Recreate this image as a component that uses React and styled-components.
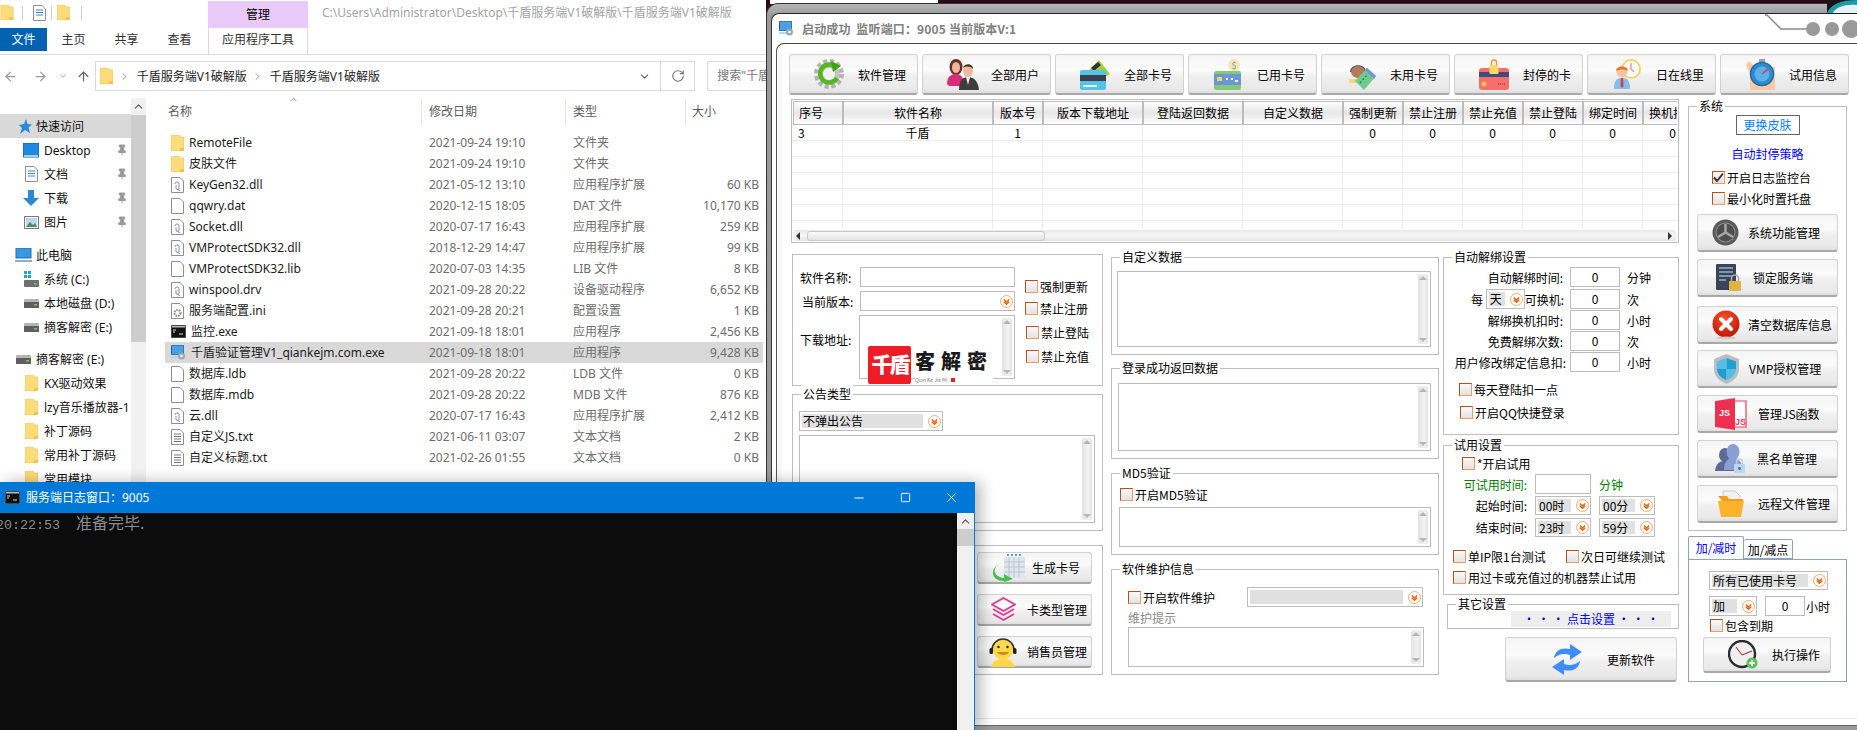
// Desktop with file explorer, log console and the Qiandun server manager window
import React from 'react';
import styled, { createGlobalStyle } from 'styled-components';
import { ArrowLeft, ArrowRight, ArrowUp, ChevronDown, ChevronRight, ChevronUp, RotateCw, Pin, Minus, Square, X } from 'lucide-react';

const sans = `"Noto Sans", "Noto Sans CJK SC", sans-serif`;
const cjk = `"Noto Sans CJK SC", sans-serif`;

const Global = createGlobalStyle`
  html, body { margin: 0; padding: 0; background: #2a0a16; }
  * { box-sizing: border-box; }
  body { font-family: ${cjk}; font-size: 12px; line-height: 17px; color: #000; }
`;

const Desktop = styled.div`
  position: relative;
  width: 1857px;
  height: 730px;
  overflow: hidden;
  background: #2a0a16;
`;

const WhiteStrip = styled.div`
  position: absolute;
  left: 770px;
  top: 0;
  width: 168px;
  height: 4px;
  background: #fff;
`;

const CornerArt = styled.svg`
  position: absolute;
  right: 0;
  top: 0;
  z-index: 3;
`;

/* ---------- explorer ---------- */

const Explorer = styled.div`
  position: absolute;
  left: 0;
  top: 0;
  width: 766px;
  height: 484px;
  background: #fff;
  font-family: ${sans};
  overflow: hidden;
`;

const TitleRow = styled.div`
  display: flex;
  align-items: flex-start;
  height: 28px;
`;

const QuickBar = styled.div`
  display: flex;
  align-items: center;
  width: 208px;
  height: 24px;
  padding-top: 1px;
`;

const QuickSep = styled.i`
  width: 1px;
  height: 14px;
  background: #ccc;
  margin: 0 ${p => p.$r}px 0 ${p => p.$l}px;
`;

const ContextTab = styled.div`
  width: 100px;
  height: 27px;
  margin-top: 1px;
  background: #e8c9f8;
  text-align: center;
  line-height: 27px;
`;

const PathTitle = styled.div`
  margin-left: 14px;
  line-height: 26px;
  color: #a3a3a3;
  white-space: nowrap;
`;

const RibbonTabs = styled.div`
  display: flex;
  height: 27px;
  border-bottom: 1px solid #dadada;
`;

const FileTab = styled.div`
  width: 47px;
  height: 23px;
  background: #0063b1;
  color: #fff;
  text-align: center;
  line-height: 23px;
`;

const RibbonTab = styled.div`
  width: ${p => p.$w || 53}px;
  height: 26px;
  line-height: 24px;
  text-align: center;
  color: #333;
  margin-left: ${p => p.$ml || 0}px;
  ${p => p.$boxed && 'border-left: 1px solid #dadada; border-right: 1px solid #dadada;'}
`;

const NavBar = styled.div`
  display: flex;
  align-items: center;
  height: 36px;
  padding-top: 6px;
`;

const NavArrows = styled.div`
  display: flex;
  align-items: center;
  width: 97px;
  padding-left: 3px;
  gap: 2px;
  color: #9a9a9a;
`;

const AddressBox = styled.div`
  display: flex;
  align-items: center;
  width: 615px;
  height: 30px;
  border: 1px solid #d9d9d9;
  padding-left: 4px;
  color: #222;
`;

const Crumb = styled.span`
  white-space: nowrap;
  margin-right: 5px;
`;

const CrumbArrow = styled(ChevronRight)`
  flex: none;
  margin: 0 7px 0 ${p => p.$ml || 0}px;
  color: #888;
`;

const AddressEnd = styled.div`
  margin-left: auto;
  display: flex;
  align-items: center;
  height: 100%;
  color: #666;
`;

const RefreshSlot = styled.div`
  display: flex;
  align-items: center;
  justify-content: center;
  width: 34px;
  height: 100%;
  margin-left: 9px;
  border-left: 1px solid #d9d9d9;
  color: #777;
`;

const SearchBox = styled.div`
  width: 60px;
  height: 30px;
  margin-left: 12px;
  border: 1px solid #d9d9d9;
  border-right: 0;
  padding-left: 9px;
  line-height: 28px;
  color: #777;
  white-space: nowrap;
  overflow: hidden;
`;

const ExplorerBody = styled.div`
  display: flex;
  height: 393px;
  padding-top: 7px;
`;

const NavPane = styled.div`
  width: 131px;
  padding-top: 16px;
`;

const NavRow = styled.div`
  display: flex;
  align-items: center;
  height: 24px;
  padding-left: ${p => p.$indent}px;
  margin-top: ${p => p.$mt || 0}px;
  white-space: nowrap;
  color: #111;
  background: ${p => (p.$active ? '#d9d9d9' : 'transparent')};
  overflow: hidden;
`;

const NavLabel = styled.span`
  margin-left: ${p => p.$gap || 4}px;
  flex: 1;
`;

const NavPin = styled.span`
  display: flex;
  color: #9a9a9a;
  margin-right: 3px;
`;

const NavScroll = styled.div`
  width: 15px;
  background: #f1f1f1;
  display: flex;
  flex-direction: column;
  align-items: center;
  color: #555;
`;

const NavThumb = styled.div`
  width: 15px;
  height: 227px;
  margin-top: 2px;
  background: #cdcdcd;
`;

const FileList = styled.div`
  width: 598px;
  margin-left: 19px;
`;

const FileHead = styled.div`
  display: grid;
  grid-template-columns: 257px 144px 120px 77px;
  height: 27px;
  position: relative;
  color: #5c5c5c;
  line-height: 27px;
`;

const HeadCell = styled.div`
  padding-left: ${p => p.$pl}px;
  ${p => p.$line && 'border-right: 1px solid #e5e5e5;'}
`;

const SortCaret = styled.span`
  position: absolute;
  left: 123px;
  top: -4px;
  display: flex;
  color: #8a8a8a;
`;

const FileRows = styled.div`
  padding-top: 7px;
`;

const FileRow = styled.div`
  display: grid;
  grid-template-columns: 257px 144px 120px 77px;
  height: 21px;
  line-height: 21px;
  color: #6d6d6d;
  background: ${p => (p.$active ? '#d9d9d9' : 'transparent')};
`;

const FileName = styled.div`
  display: flex;
  align-items: center;
  gap: 5px;
  padding-left: 6px;
  color: #1c1c1c;
  white-space: nowrap;
`;

const FileCell = styled.div`
  padding-left: 7px;
  white-space: nowrap;
`;

const SizeCell = styled.div`
  text-align: right;
  padding-right: 4px;
`;

/* ---------- console ---------- */

const ConsoleWin = styled.div`
  position: absolute;
  left: 0;
  top: 482px;
  width: 975px;
  height: 248px;
  z-index: 5;
  background: #0c0c0c;
  border-right: 1px solid #0078d7;
  box-shadow: 6px 0 14px rgba(0, 0, 0, 0.28);
`;

const ConsoleBar = styled.div`
  display: flex;
  align-items: center;
  height: 31px;
  padding-left: 5px;
  background: #0078d7;
  color: #fff;
  font-family: ${sans};
`;

const ConsoleTitle = styled.span`
  margin-left: 6px;
  flex: 1;
`;

const ConsoleBtn = styled.span`
  display: flex;
  justify-content: center;
  width: 46px;
  color: #fff;
`;

const ConsoleBody = styled.div`
  display: flex;
  justify-content: space-between;
  height: 217px;
`;

const ConsoleText = styled.pre`
  margin: 1px 0 0 -4px;
  font-family: "Liberation Mono", ${cjk}, monospace;
  font-size: 13.33px;
  line-height: 17px;
  color: #8b8b8b;
`;

const ConsoleWide = styled.span`
  font-family: ${cjk};
  font-size: 16px;
`;

const ConsoleScroll = styled.div`
  width: 17px;
  background: #f0f0f0;
  display: flex;
  flex-direction: column;
  align-items: center;
  color: #555;
`;

const ConsoleThumb = styled.div`
  width: 17px;
  height: 17px;
  margin-top: 1px;
  background: #cdcdcd;
`;

/* ---------- server window frame ---------- */

const ServerFrame = styled.div`
  position: absolute;
  left: 766px;
  top: 3px;
  right: 0;
  height: 740px;
  background: linear-gradient(#b5b5b5, #999 12px);
  border-left: 1px solid #333;
  border-top: 1px solid #333;
  border-top-left-radius: 12px;
  padding: 9px 0 0 4px;
`;

const Shell = styled.div`
  position: relative;
  height: 713px;
  background: #fff;
  border-left: 1px solid #333;
  border-top: 1px solid #222;
  border-bottom: 1px solid #666;
  border-top-left-radius: 8px;
  padding-left: 4px;
`;

const TitleBar = styled.div`
  display: flex;
  align-items: center;
  height: 29px;
  padding-left: 3px;
  font-weight: 700;
  color: #808080;
`;

const TitleText = styled.span`
  margin-left: 8px;
  white-space: pre;
  letter-spacing: 0.15px;
`;

const ControlsArt = styled.svg`
  position: absolute;
  right: 0;
  top: 0;
`;

const Panel = styled.div`
  height: 676px;
  border-left: 1px solid #555;
  border-top: 1px solid #444;
  border-bottom: 1px solid #e6e6e6;
  border-top-left-radius: 8px;
  padding: 10px 0 0 14px;
  box-shadow: inset 5px 0 0 #f8f8f8;
`;

const Toolbar = styled.div`
  display: flex;
  gap: 4px;
  margin-left: -2px;
`;

const IconBtn = styled.div`
  display: flex;
  align-items: center;
  flex: none;
  width: ${p => p.$w}px;
  height: ${p => p.$h}px;
  margin: ${p => p.$mt || 0}px 0 0 ${p => p.$ml || 0}px;
  border: 1px solid #d2d2d2;
  border-bottom: 2px solid #a8a8a8;
  border-radius: 3px;
  background: linear-gradient(#f5f5f5, #fbfbfb 40%, #f0f0f0 55%, #e9e9e9 90%, #dedede);
  white-space: nowrap;
`;

const IconSlot = styled.span`
  display: flex;
  align-items: center;
  justify-content: center;
  flex: none;
  width: ${p => p.$lead}px;
  padding-left: ${p => p.$pad || 0}px;
`;

const MainRow = styled.div`
  display: flex;
  margin-top: 4px;
`;

const LeftPane = styled.div`
  width: 888px;
`;

const Columns = styled.div`
  display: flex;
`;

const Column = styled.div`
  width: ${p => p.$w}px;
  margin-left: ${p => p.$ml || 0}px;
  display: flex;
  flex-direction: column;
`;

/* ---------- table ---------- */

const TableBox = styled.div`
  width: 888px;
  height: 144px;
  border: 1px solid #bdbdbd;
  padding: 1px;
  overflow: hidden;
`;

const columns = '50px 150px 50px 100px 100px 100px 60px 60px 60px 60px 60px 60px';

const TableHead = styled.div`
  display: grid;
  grid-template-columns: ${columns};
  width: 884px;
  height: 24px;
  overflow: hidden;
`;

const HeadTh = styled.div`
  border: 1px solid #bcbcbc;
  background: linear-gradient(#fff, #e6e6e6 50%, #fff);
  line-height: 22px;
  text-align: ${p => (p.$left ? 'left' : 'center')};
  padding-left: ${p => (p.$left ? 5 : 0)}px;
  white-space: nowrap;
`;

const TableBody = styled.div`
  width: 884px;
  height: 104px;
  overflow: hidden;
`;

const TableRow = styled.div`
  display: grid;
  grid-template-columns: ${columns};
  height: 16px;
`;

const TableCell = styled.div`
  border-right: 1px solid #ececec;
  border-bottom: 1px solid #ececec;
  line-height: 15px;
  text-align: ${p => (p.$left ? 'left' : 'center')};
  padding-left: ${p => (p.$left ? 5 : 0)}px;
`;

const HScroll = styled.div`
  display: flex;
  align-items: center;
  height: 11px;
  margin-top: 1px;
  background: linear-gradient(#e8e8e8, #f6f6f6 50%, #e4e4e4);
  border-radius: 4px;
`;

const HThumb = styled.div`
  width: 238px;
  height: 10px;
  margin-left: 7px;
  border: 1px solid #c8c8c8;
  border-radius: 3px;
  background: linear-gradient(#fafafa, #e4e4e4);
`;

const ArrowCap = styled.i`
  width: 0;
  height: 0;
  margin: ${p => (p.$right ? '0 5px 0 auto' : '0 0 0 3px')};
  border-top: 4px solid transparent;
  border-bottom: 4px solid transparent;
  ${p => (p.$right ? 'border-left: 4px solid #333;' : 'border-right: 4px solid #333;')}
`;

/* ---------- form parts ---------- */

const Group = styled.div`
  position: relative;
  flex: none;
  width: ${p => (p.$w ? `${p.$w}px` : '100%')};
  height: ${p => p.$h}px;
  margin: ${p => p.$mt || 0}px 0 0 ${p => p.$ml || 0}px;
  padding: ${p => p.$pad || '0'};
  border: 1px solid ${p => p.$line || '#bdbdbd'};
`;

const Legend = styled.span`
  position: absolute;
  left: ${p => p.$x || 8}px;
  top: -10px;
  padding: 0 2px;
  background: #fff;
  white-space: nowrap;
`;

const Row = styled.div`
  display: flex;
  align-items: ${p => p.$align || 'center'};
  margin: ${p => p.$mt || 0}px 0 0 ${p => p.$ml || 0}px;
  white-space: nowrap;
`;

const FieldLabel = styled.span`
  flex: none;
  display: flex;
  justify-content: ${p => (p.$right ? 'flex-end' : 'flex-start')};
  align-items: center;
  width: ${p => p.$w}px;
  padding-right: ${p => p.$pr || 0}px;
  padding-left: ${p => p.$pl || 0}px;
  margin-top: ${p => p.$mt || 0}px;
  color: ${p => p.$color || '#000'};
`;

const Unit = styled.span`
  margin-left: ${p => p.$ml || 7}px;
  color: ${p => p.$color || '#000'};
`;

const Input = styled.div`
  flex: none;
  width: ${p => p.$w}px;
  height: ${p => p.$h || 20}px;
  margin-left: ${p => p.$ml || 0}px;
  border: 1px solid #bcbcbc;
  text-align: center;
  line-height: 18px;
`;

const TextArea = styled.div`
  position: relative;
  display: flex;
  justify-content: flex-end;
  flex: none;
  width: ${p => p.$w}px;
  height: ${p => p.$h}px;
  margin: ${p => p.$mt || 0}px 0 0 ${p => p.$ml || 0}px;
  padding: 2px;
  border: 1px solid #bcbcbc;
  background: #fff;
`;

const VScroll = styled.div`
  display: flex;
  flex-direction: column;
  justify-content: space-between;
  align-items: center;
  width: 10px;
  height: 100%;
  padding: 2px 0;
  border-radius: 3px;
  background: linear-gradient(90deg, #e2e2e2, #f2f2f2 60%, #e2e2e2);
`;

const ScrollTip = styled.i`
  width: 0;
  height: 0;
  border-left: 4px solid transparent;
  border-right: 4px solid transparent;
  ${p => (p.$down ? 'border-top: 4px solid #b5b5b5;' : 'border-bottom: 4px solid #b5b5b5;')}
`;

const Drop = styled.div`
  display: flex;
  align-items: center;
  flex: none;
  width: ${p => p.$w}px;
  height: ${p => p.$h || 20}px;
  margin-left: ${p => p.$ml || 0}px;
  padding: 2px 1px 2px 2px;
  border: 1px solid #bcbcbc;
`;

const DropFill = styled.span`
  flex: 1;
  height: 100%;
  margin-right: 5px;
  padding-left: 1px;
  background: ${p => (p.$empty ? '#fff' : '#e0e0e0')};
  line-height: 14px;
  overflow: hidden;
`;

const ChevronMark = styled.svg`
  flex: none;
`;

const CheckLine = styled.div`
  display: flex;
  align-items: center;
  height: 13px;
  gap: 2px;
  ${p => p.$w && `width: ${p.$w}px;`}
  margin: ${p => p.$mt || 0}px 0 0 ${p => p.$ml || 0}px;
  white-space: nowrap;
`;

const CheckBox = styled.span`
  display: flex;
  align-items: center;
  justify-content: center;
  flex: none;
  width: 13px;
  height: 13px;
  border: 1px solid;
  border-color: #b8501e #f09a6a #f09a6a #b8501e;
  background: linear-gradient(#fafafa, #e2e2e2);
`;

const FormSplit = styled.div`
  display: flex;
`;

const CheckColumn = styled.div`
  margin: 13px 0 0 10px;
`;

const Watermark = styled.div`
  position: absolute;
  left: 75px;
  top: 91px;
  display: flex;
  align-items: flex-start;
  z-index: 1;
`;

const StampMark = styled.span`
  display: flex;
  align-items: center;
  justify-content: center;
  width: 43px;
  height: 38px;
  background: #ee1c25;
  color: #fff;
  font-family: "Liberation Serif", ${cjk}, serif;
  font-size: 21px;
  font-weight: 900;
  letter-spacing: -3px;
  border-radius: 2px;
`;

const WaterInk = styled.span`
  display: flex;
  flex-direction: column;
  margin: 3px 0 0 4px;
  font-size: 20px;
  line-height: 24px;
  font-weight: 900;
  letter-spacing: 6px;
  color: #1b1b1b;
`;

const WaterSmall = styled.small`
  display: flex;
  align-items: center;
  gap: 3px;
  margin-top: 3px;
  font-size: 5px;
  line-height: 7px;
  letter-spacing: 0;
  font-weight: 400;
  color: #777;
  background: #fff;
`;

const WaterDot = styled.i`
  width: 4px;
  height: 4px;
  background: #ee1c25;
`;

const LinkBox = styled.div`
  width: 64px;
  height: 20px;
  margin-top: 8px;
  border: 1px solid #666;
  color: #0080ff;
  text-align: center;
  line-height: 18px;
`;

const BlueText = styled.div`
  margin-top: 10px;
  color: #0000ff;
  text-align: center;
`;

const SysGroup = styled(Group)`
  display: flex;
  flex-direction: column;
  align-items: center;
`;

const Sidebar = styled.div`
  width: 159px;
  margin-left: 9px;
  padding-top: 7px;
`;

const SysChecks = styled.div`
  align-self: flex-start;
  margin: 9px 0 0 23px;
`;

const ClickFill = styled.div`
  width: 160px;
  height: 16px;
  margin: 6px 0 0 63px;
  background: #eee;
  color: #0000ff;
  text-align: center;
  line-height: 15px;
  white-space: pre;
`;

const HintText = styled.div`
  margin-top: 2px;
  color: #8a8a8a;
`;

const TabStrip = styled.div`
  display: flex;
  align-items: flex-end;
  height: 23px;
  margin-top: 5px;
`;

const TabItem = styled.div`
  position: relative;
  width: ${p => p.$w}px;
  height: ${p => (p.$active ? 24 : 20)}px;
  margin-bottom: ${p => (p.$active ? -1 : 0)}px;
  border: 1px solid #8aa5b5;
  border-bottom: ${p => (p.$active ? '0' : '1px solid #8aa5b5')};
  border-left: ${p => (p.$active ? '1px solid #8aa5b5' : '0')};
  border-radius: 2px 2px 0 0;
  background: #fff;
  color: ${p => (p.$active ? '#0000ff' : '#000')};
  text-align: center;
  line-height: ${p => (p.$active ? 22 : 19)}px;
`;

/* ---------- drawn icons ---------- */

const Chevron = () => (
  <ChevronMark width="13" height="13" viewBox="0 0 13 13">
    <circle cx="6.5" cy="6.5" r="6" fill="#fff" stroke="#ffa76c" />
    <path d="M3.8 4.6 6.5 7 9.2 4.6M3.8 6.8 6.5 9.2 9.2 6.8" fill="none" stroke="#f0600a" strokeWidth="1.4" />
  </ChevronMark>
);

const Check = ({ on, text, mt, ml, w }) => (
  <CheckLine $mt={mt} $ml={ml} $w={w}>
    <CheckBox>
      {on && (
        <svg width="11" height="11" viewBox="0 0 11 11">
          <path d="M1 5.5 4 9 10 1.5" fill="none" stroke="#333" strokeWidth="2" />
        </svg>
      )}
    </CheckBox>
    {text}
  </CheckLine>
);

const Area = props => (
  <TextArea {...props}>
    {props.children}
    <VScroll>
      <ScrollTip />
      <ScrollTip $down />
    </VScroll>
  </TextArea>
);

const Select = ({ w, h, ml, text, empty }) => (
  <Drop $w={w} $h={h} $ml={ml}>
    <DropFill $empty={empty}>{text}</DropFill>
    <Chevron />
  </Drop>
);

const GearIcon = () => (
  <svg width="32" height="32" viewBox="0 0 32 32">
    <circle cx="16" cy="16" r="12.5" fill="none" stroke="#b3b3b3" strokeWidth="5" strokeDasharray="4 2.6" />
    <circle cx="16" cy="16" r="10.5" fill="#c4c4c4" />
    <circle cx="16" cy="16" r="6" fill="#f2f2f2" />
    <path d="M21 8A9 9 0 1 0 24 20" fill="none" stroke="#52b81e" strokeWidth="4.5" />
    <path d="M18 3 28 8 20 14Z" fill="#3fa312" />
  </svg>
);

const PeopleIcon = () => (
  <svg width="33" height="31" viewBox="0 0 33 31">
    <ellipse cx="10" cy="8" rx="6.5" ry="8" fill="#6b2e22" />
    <ellipse cx="10" cy="8.5" rx="4" ry="5.5" fill="#efb9a0" />
    <path d="M1 25C1 17 6 15 10 15S18 18 18 25L14 27H3Z" fill="#d62f78" />
    <ellipse cx="22" cy="12" rx="5" ry="6" fill="#efb9a0" />
    <path d="M17 9C18 4 27 4 27 10 24 7 20 7 17 9Z" fill="#4a2e1c" />
    <path d="M13 31C13 21 17 18 22 18S32 21 33 31Z" fill="#3d3d3d" />
    <path d="M20 18H24L22 26Z" fill="#f0f0f0" />
  </svg>
);

const CardIcon = () => (
  <svg width="30" height="31" viewBox="0 0 30 31">
    <path d="M6 14 19 1 30 15 20 21Z" fill="#a6cf3e" />
    <path d="M11 9 18 3 21 6 14 12Z" fill="#333" />
    <rect x="0" y="11" width="26" height="20" rx="2" fill="#53c3e8" />
    <rect x="0" y="16" width="26" height="6" fill="#3a3f4a" />
    <rect x="3" y="26" width="14" height="2" fill="#e8f8ff" />
  </svg>
);

const UsedCardIcon = () => (
  <svg width="28" height="31" viewBox="0 0 28 31">
    <circle cx="20" cy="6" r="6" fill="#fbe3c2" />
    <text x="17.5" y="9.5" fontSize="9" fill="#57b56a">$</text>
    <rect x="0" y="12" width="27" height="19" rx="2" fill="#84c973" />
    <rect x="0" y="15" width="27" height="11" fill="#6b97d9" />
    <rect x="3" y="18" width="5" height="4" fill="#f4d35e" />
    <path d="M12 20H14M17 20H19M21 22H24" stroke="#fff" strokeWidth="2" />
  </svg>
);

const OfficerIcon = () => (
  <svg width="29" height="31" viewBox="0 0 29 31">
    <path d="M3 13C3 4 19 4 19 13Z" fill="#3f4f72" />
    <ellipse cx="11" cy="13" rx="7" ry="6" fill="#b57a5c" />
    <path d="M2 20H17V24H2Z" fill="#f6d879" />
    <path d="M8 22 20 9 29 17 17 31Z" fill="#6ecc8c" />
    <path d="M20 9 29 17 27 20 18 11Z" fill="#7f8fe0" />
    <path d="M13 24 21 15" stroke="#2f7f52" strokeWidth="1.2" strokeDasharray="2 2" />
  </svg>
);

const LockedCardIcon = () => (
  <svg width="30" height="31" viewBox="0 0 30 31">
    <rect x="0" y="9" width="30" height="22" rx="3" fill="#f66e6e" />
    <rect x="0" y="13" width="30" height="5" fill="#3f4f7a" />
    <circle cx="5" cy="25" r="2.5" fill="#f6c544" />
    <path d="M19 25H26" stroke="#7a2a2a" strokeWidth="1" strokeDasharray="1 1" />
    <rect x="10.5" y="6" width="9" height="9" rx="1" fill="#f9d96a" />
    <path d="M12.5 6V3.5A2.5 2.5 0 0 1 17.5 3.5V6" fill="none" stroke="#e89a2a" strokeWidth="1.5" />
  </svg>
);

const OnlineIcon = () => (
  <svg width="28" height="30" viewBox="0 0 28 30">
    <circle cx="18" cy="10" r="9" fill="#fff" stroke="#f3d26a" strokeWidth="2" />
    <path d="M18 4V10L21 13" fill="none" stroke="#e98a7a" strokeWidth="1.3" />
    <path d="M1 30C1 21 4 19 9 19S17 21 17 30Z" fill="#80bfec" />
    <circle cx="9" cy="13" r="5.5" fill="#f6c4a2" />
    <path d="M3 12C3 6 15 6 15 12 12 10 7 10 3 12Z" fill="#e8702a" />
    <path d="M8 19H10L10.5 27 9 29 7.5 27Z" fill="#e5383b" />
  </svg>
);

const TrialIcon = () => (
  <svg width="29" height="31" viewBox="0 0 29 31">
    <path d="M4 31V15L0 6 3 2 10 9 24 8 29 8V31Z" fill="#fbc8a2" />
    <rect x="13" y="0" width="6" height="3" fill="#9aa4b0" />
    <circle cx="16" cy="15" r="11.5" fill="#2f8bd0" stroke="#1f6aa5" strokeWidth="1.5" />
    <circle cx="16" cy="15" r="7.5" fill="#5bb0e8" />
    <path d="M16 15 22 10" stroke="#e5383b" strokeWidth="1.5" />
  </svg>
);

const DiscIcon = () => (
  <svg width="27" height="27" viewBox="0 0 27 27">
    <circle cx="13.5" cy="13.5" r="13" fill="#5a5a5a" />
    <circle cx="13.5" cy="13.5" r="10" fill="#8e8e8e" />
    <circle cx="13.5" cy="13.5" r="9" fill="#4e4e4e" />
    <path d="M13.5 13.5V5M13.5 13.5 6 18M13.5 13.5 21 18" stroke="#a8a8a8" strokeWidth="2.5" />
  </svg>
);

const ServerLockIcon = () => (
  <svg width="25" height="28" viewBox="0 0 25 28">
    <rect x="0" y="0" width="20" height="26" rx="1" fill="#3b4358" />
    <path d="M3 4H17M3 8H17M3 12H17M3 16H10" stroke="#8fb4c9" strokeWidth="1.6" />
    <rect x="13" y="17" width="12" height="10" rx="1" fill="#e3b341" />
    <path d="M15.5 17V14.5A3.5 3.5 0 0 1 22.5 14.5V17" fill="none" stroke="#a8a8a8" strokeWidth="1.6" />
  </svg>
);

const RedXIcon = () => (
  <svg width="28" height="30" viewBox="0 0 28 30">
    <defs>
      <radialGradient id="rx" cx="45%" cy="30%" r="70%">
        <stop offset="0" stopColor="#f6512b" />
        <stop offset="1" stopColor="#c01505" />
      </radialGradient>
    </defs>
    <circle cx="14" cy="14" r="13.5" fill="url(#rx)" />
    <ellipse cx="14" cy="28" rx="10" ry="1.5" fill="#ccc" />
    <path d="M9 9 19 19M19 9 9 19" stroke="#fff" strokeWidth="4" strokeLinecap="round" />
  </svg>
);

const ShieldIcon = () => (
  <svg width="25" height="30" viewBox="0 0 25 30">
    <path d="M12.5 0 25 5V15C25 23 18 28 12.5 30 7 28 0 23 0 15V5Z" fill="#b7bfc4" />
    <path d="M12.5 4 22 7.5V15H12.5ZM12.5 15V26C7 24 3 20 3 15Z" fill="#1f9ed1" />
    <path d="M12.5 4V15H3V7.5ZM12.5 15H22C22 20 18 24 12.5 26Z" fill="#56bde4" />
  </svg>
);

const JsIcon = () => (
  <svg width="32" height="32" viewBox="0 0 32 32">
    <path d="M19 3H31V29H17" fill="#fff" stroke="#ee3b58" strokeWidth="1.2" />
    <path d="M0 3 20 0V32L0 29Z" fill="#ef2f50" />
    <text x="4" y="18" fontSize="9" fontWeight="700" fill="#fff" fontFamily="Liberation Sans">JS</text>
    <text x="20" y="27" fontSize="9" fontWeight="700" fill="#ee3b58" fontFamily="Liberation Sans">JS</text>
  </svg>
);

const BlacklistIcon = () => (
  <svg width="30" height="29" viewBox="0 0 30 29">
    <ellipse cx="10" cy="11" rx="6" ry="7" fill="#5b6b94" />
    <path d="M0 27C1 18 6 17 10 17S18 19 19 27Z" fill="#5b6b94" />
    <ellipse cx="18" cy="8" rx="6.5" ry="8" fill="#8a9ed4" />
    <path d="M9 26C9 17 13 14 18 14S27 17 28 26Z" fill="#8a9ed4" />
    <rect x="19" y="20" width="11" height="9" rx="1" fill="#b9d8ee" />
    <path d="M21.5 20V18A3 3 0 0 1 27.5 18V20" fill="none" stroke="#b9d8ee" strokeWidth="1.5" />
    <circle cx="24.5" cy="24.5" r="1.4" fill="#3d6f98" />
  </svg>
);

const FolderOpenIcon = () => (
  <svg width="26" height="27" viewBox="0 0 26 27">
    <path d="M5 1H17L22 6V15H5Z" fill="#f2f2f2" stroke="#ccc" />
    <path d="M0 6H9L11 9H25V12H5Z" fill="#f59c18" />
    <path d="M0 11H26L23 27H3Z" fill="#fdb22b" />
  </svg>
);

const RefreshIcon = () => (
  <svg width="30" height="33" viewBox="0 0 30 33">
    <path d="M2 15C3 7 10 4 18 6V1L30 9 18 17V12C12 10 7 11 2 15Z" fill="#3f8cff" />
    <path d="M28 18C27 26 20 29 12 27V32L0 24 12 16V21C18 23 23 22 28 18Z" fill="#3f8cff" />
  </svg>
);

const ClockPlusIcon = () => (
  <svg width="30" height="29" viewBox="0 0 30 29">
    <circle cx="14" cy="14" r="13" fill="#efefef" stroke="#2c2c2c" strokeWidth="2.4" />
    <path d="M14 15 8 7M14 15 24 11" stroke="#b33" strokeWidth="1.1" />
    <circle cx="24" cy="23" r="5.5" fill="#5fbf5f" />
    <path d="M24 20V26M21 23H27" stroke="#fff" strokeWidth="1.6" />
  </svg>
);

const TableArrowIcon = () => (
  <svg width="33" height="28" viewBox="0 0 33 28">
    <rect x="11" y="3" width="21" height="21" fill="#dfe6ee" />
    <path d="M11 8H32M11 13H32M11 18H32M16 3V24M21 3V24M26 3V24" stroke="#b9c6d4" />
    <path d="M14 1H30" stroke="#4aa3e0" strokeWidth="2" strokeDasharray="2 2" />
    <path d="M9 9C-1 12-1 23 11 24V20L20 25 11 28V27C-3 27-4 13 9 9Z" fill="#46c04a" />
  </svg>
);

const LayersIcon = () => (
  <svg width="25" height="25" viewBox="0 0 25 25">
    <path d="M12.5 1 24 7.5 12.5 14 1 7.5Z" fill="none" stroke="#e23a8a" strokeWidth="1.8" />
    <path d="M2 12 12.5 18 23 12M2 17 12.5 23 23 17" fill="none" stroke="#e23a8a" strokeWidth="1.8" />
  </svg>
);

const DuckIcon = () => (
  <svg width="30" height="30" viewBox="0 0 30 30">
    <path d="M3 30C5 24 8 22 15 22S25 24 27 30Z" fill="#ffd84a" />
    <circle cx="15" cy="12" r="10.5" fill="#ffd84a" />
    <path d="M4 13A11 11 0 0 1 26 13" fill="none" stroke="#333" strokeWidth="1.6" />
    <rect x="1.5" y="11" width="3.5" height="6" rx="1.5" fill="#222" />
    <rect x="25" y="11" width="3.5" height="6" rx="1.5" fill="#222" />
    <circle cx="10.5" cy="10" r="1.2" fill="#222" />
    <circle cx="19.5" cy="10" r="1.2" fill="#222" />
    <path d="M9 15H21C20 19 10 19 9 15Z" fill="#d08a1a" />
  </svg>
);

const AppMonitorIcon = ({ size = 15 }) => (
  <svg width={size} height={size} viewBox="0 0 15 15">
    <rect x="0" y="0" width="13" height="10" fill="#2b7cc4" />
    <rect x="1" y="1" width="11" height="8" fill="#4aa0e0" />
    <path d="M0 2V8" stroke="#123a66" />
    <circle cx="10.5" cy="11" r="3.5" fill="#9aa7b5" />
    <circle cx="10.5" cy="11" r="1.3" fill="#fff" />
    <rect x="0" y="11" width="7" height="2" fill="#c4d3e0" />
  </svg>
);

const FolderIcon = ({ w = 13, h = 16 }) => (
  <svg width={w} height={h} viewBox="0 0 13 16">
    <path d="M0 0H8L9 2H13V16H0Z" fill="#ffdc7a" stroke="#e8bd55" strokeWidth="0.6" />
    <rect x="9" y="13" width="4" height="3" fill="#f2c14e" />
  </svg>
);

const PageIcon = ({ type }) => (
  <svg width="13" height="16" viewBox="0 0 13 16">
    <path d="M0.5 0.5H9L12.5 4V15.5H0.5Z" fill="#fff" stroke="#8f8f8f" />
    {type === 'dll' && <path d="M4 7A2 2 0 0 1 8 7V11A1.4 1.4 0 0 1 5 11V8M6 12 9 14" fill="none" stroke="#7d95a8" />}
    {type === 'txt' && <path d="M3 5H10M3 7.5H10M3 10H10M3 12.5H10" stroke="#777" />}
    {type === 'ini' && <circle cx="6.5" cy="10" r="3" fill="none" stroke="#8a8a8a" strokeWidth="2" strokeDasharray="1.5 1" />}
    {type === 'doc' && <path d="M3 5H10M3 7.5H10M3 10H10" stroke="#3d87c4" />}
  </svg>
);

const TerminalIcon = ({ w = 15, h = 13 }) => (
  <svg width={w} height={h} viewBox="0 0 15 13">
    <rect x="0" y="0" width="15" height="13" fill="#111" stroke="#999" strokeWidth="0.8" />
    <rect x="1" y="1" width="13" height="1.5" fill="#bbb" />
    <path d="M2 5H5M2 7H4M8 9H12" stroke="#ddd" />
  </svg>
);

const StarIcon = () => (
  <svg width="14" height="15" viewBox="0 0 14 15">
    <path d="M8 0 9.5 5 14 5.5 10.5 8.5 12 14 7 11 2 15 4 9 1 6 6 5Z" fill="#2a88d8" />
  </svg>
);

const DesktopIcon = () => (
  <svg width="16" height="15" viewBox="0 0 16 15">
    <rect x="0" y="0" width="16" height="14" fill="#1e88e5" stroke="#125ea8" />
    <rect x="1" y="12" width="14" height="2" fill="#9fd0f5" />
  </svg>
);

const DownIcon = () => (
  <svg width="16" height="16" viewBox="0 0 16 16">
    <path d="M5 0H11V8H16L8 16 0 8H5Z" fill="#2f87d8" />
  </svg>
);

const PictureIcon = () => (
  <svg width="15" height="13" viewBox="0 0 15 13">
    <rect x="0.5" y="0.5" width="14" height="12" fill="#fff" stroke="#7a7a7a" />
    <rect x="2" y="2" width="11" height="9" fill="#b8d8ee" />
    <path d="M2 11 6 6 9 9 11 7 13 11Z" fill="#4f8f5f" />
  </svg>
);

const PcIcon = () => (
  <svg width="17" height="15" viewBox="0 0 17 15">
    <rect x="1" y="0" width="15" height="10" fill="#3a96dd" stroke="#2271b3" />
    <path d="M0 13H17" stroke="#9ab" strokeWidth="2" />
  </svg>
);

const WinDriveIcon = () => (
  <svg width="15" height="16" viewBox="0 0 15 16">
    <path d="M0 0H3V3H0ZM4 0H7V3H4ZM0 4H3V7H0ZM4 4H7V7H4Z" fill="#1ba1e2" />
    <rect x="0" y="9" width="15" height="7" rx="1" fill="#6f6f6f" />
    <rect x="10" y="12" width="3" height="1.5" fill="#5fd35f" />
  </svg>
);

const DriveIcon = () => (
  <svg width="15" height="9" viewBox="0 0 15 9">
    <rect x="0" y="0" width="15" height="3" rx="1" fill="#b5b5b5" />
    <rect x="0" y="3" width="15" height="6" fill="#5f5f5f" />
    <rect x="10" y="5" width="3" height="1.5" fill="#5fd35f" />
  </svg>
);

const ToolBtn = ({ icon, text }) => (
  <IconBtn $w={129} $h={41}>
    <IconSlot $lead={68} $pad={10}>{icon}</IconSlot>
    {text}
  </IconBtn>
);

const SideBtn = ({ icon, text, lead, mt }) => (
  <IconBtn $w={141} $h={38} $mt={mt}>
    <IconSlot $lead={lead} $pad={5}>{icon}</IconSlot>
    {text}
  </IconBtn>
);

const files = [
  ['folder', 'RemoteFile', '2021-09-24 19:10', '文件夹', ''],
  ['folder', '皮肤文件', '2021-09-24 19:10', '文件夹', ''],
  ['dll', 'KeyGen32.dll', '2021-05-12 13:10', '应用程序扩展', '60 KB'],
  ['page', 'qqwry.dat', '2020-12-15 18:05', 'DAT 文件', '10,170 KB'],
  ['dll', 'Socket.dll', '2020-07-17 16:43', '应用程序扩展', '259 KB'],
  ['dll', 'VMProtectSDK32.dll', '2018-12-29 14:47', '应用程序扩展', '99 KB'],
  ['page', 'VMProtectSDK32.lib', '2020-07-03 14:35', 'LIB 文件', '8 KB'],
  ['dll', 'winspool.drv', '2021-09-28 20:22', '设备驱动程序', '6,652 KB'],
  ['ini', '服务端配置.ini', '2021-09-28 20:21', '配置设置', '1 KB'],
  ['term', '监控.exe', '2021-09-18 18:01', '应用程序', '2,456 KB'],
  ['app', '千盾验证管理V1_qiankejm.com.exe', '2021-09-18 18:01', '应用程序', '9,428 KB', true],
  ['page', '数据库.ldb', '2021-09-28 20:22', 'LDB 文件', '0 KB'],
  ['page', '数据库.mdb', '2021-09-28 20:22', 'MDB 文件', '876 KB'],
  ['dll', '云.dll', '2020-07-17 16:43', '应用程序扩展', '2,412 KB'],
  ['txt', '自定义JS.txt', '2021-06-11 03:07', '文本文档', '2 KB'],
  ['txt', '自定义标题.txt', '2021-02-26 01:55', '文本文档', '0 KB'],
];

const fileIcon = type => {
  if (type === 'folder') return <FolderIcon />;
  if (type === 'term') return <TerminalIcon />;
  if (type === 'app') return <AppMonitorIcon />;
  return <PageIcon type={type} />;
};

const navRows = [
  { indent: 18, icon: <StarIcon />, text: '快速访问', active: true },
  { indent: 23, icon: <DesktopIcon />, text: 'Desktop', pin: true, gap: 5 },
  { indent: 25, icon: <PageIcon type="doc" />, text: '文档', pin: true, gap: 6 },
  { indent: 23, icon: <DownIcon />, text: '下载', pin: true, gap: 5 },
  { indent: 24, icon: <PictureIcon />, text: '图片', pin: true, gap: 5 },
  { indent: 15, icon: <PcIcon />, text: '此电脑', mt: 9 },
  { indent: 24, icon: <WinDriveIcon />, text: '系统 (C:)', gap: 5 },
  { indent: 24, icon: <DriveIcon />, text: '本地磁盘 (D:)', gap: 5 },
  { indent: 24, icon: <DriveIcon />, text: '摘客解密 (E:)', gap: 5 },
  { indent: 16, icon: <DriveIcon />, text: '摘客解密 (E:)', mt: 8, gap: 5 },
  { indent: 25, icon: <FolderIcon />, text: 'KX驱动效果', gap: 6 },
  { indent: 25, icon: <FolderIcon />, text: 'lzy音乐播放器-1', gap: 6 },
  { indent: 25, icon: <FolderIcon />, text: '补丁源码', gap: 6 },
  { indent: 25, icon: <FolderIcon />, text: '常用补丁源码', gap: 6 },
  { indent: 25, icon: <FolderIcon />, text: '常用模块', gap: 6 },
];

const heads = ['序号', '软件名称', '版本号', '版本下载地址', '登陆返回数据', '自定义数据', '强制更新', '禁止注册', '禁止充值', '禁止登陆', '绑定时间', '换机扣时'];
const firstRow = ['3', '千盾', '1', '', '', '', '0', '0', '0', '0', '0', '0'];

const App = () => (
  <Desktop>
    <Global />
    <WhiteStrip />
    <CornerArt width="30" height="13" viewBox="0 0 30 13">
      <rect width="30" height="13" fill="#1c1418" />
      <path d="M0 13C4 4 14 0 30 0V13Z" fill="#1f9aa8" />
      <path d="M6 13C9 7 18 4 30 5V13Z" fill="#e8f3f5" />
    </CornerArt>

    <Explorer>
      <TitleRow>
        <QuickBar>
          <FolderIcon w={14} h={15} />
          <QuickSep $l={8} $r={10} />
          <PageIcon type="doc" />
          <QuickSep $l={5} $r={5} />
          <FolderIcon w={13} h={15} />
          <QuickSep $l={11} $r={0} />
        </QuickBar>
        <ContextTab>管理</ContextTab>
        <PathTitle>C:\Users\Administrator\Desktop\千盾服务端V1破解版\千盾服务端V1破解版</PathTitle>
      </TitleRow>
      <RibbonTabs>
        <FileTab>文件</FileTab>
        <RibbonTab>主页</RibbonTab>
        <RibbonTab>共享</RibbonTab>
        <RibbonTab>查看</RibbonTab>
        <RibbonTab $w={100} $ml={2} $boxed>应用程序工具</RibbonTab>
      </RibbonTabs>
      <NavBar>
        <NavArrows>
          <ArrowLeft size={15} />
          <ArrowRight size={15} style={{ marginLeft: 13 }} />
          <ChevronDown size={10} style={{ marginLeft: 8 }} />
          <ArrowUp size={15} style={{ marginLeft: 6, color: '#666' }} />
        </NavArrows>
        <AddressBox>
          <FolderIcon />
          <CrumbArrow size={11} $ml={6} />
          <Crumb>千盾服务端V1破解版</Crumb>
          <CrumbArrow size={11} />
          <Crumb>千盾服务端V1破解版</Crumb>
          <AddressEnd>
            <ChevronDown size={13} />
            <RefreshSlot><RotateCw size={14} /></RefreshSlot>
          </AddressEnd>
        </AddressBox>
        <SearchBox>搜索"千盾</SearchBox>
      </NavBar>
      <ExplorerBody>
        <NavPane>
          {navRows.map((r, i) => (
            <NavRow key={`nav${i}`} $indent={r.indent} $active={r.active} $mt={r.mt}>
              {r.icon}
              <NavLabel $gap={r.gap}>{r.text}</NavLabel>
              {r.pin && <NavPin><Pin size={12} fill="#9a9a9a" /></NavPin>}
            </NavRow>
          ))}
        </NavPane>
        <NavScroll>
          <ChevronUp size={13} style={{ marginTop: 2 }} />
          <NavThumb />
        </NavScroll>
        <FileList>
          <FileHead>
            <SortCaret><ChevronUp size={11} /></SortCaret>
            <HeadCell $pl={3} $line>名称</HeadCell>
            <HeadCell $pl={7} $line>修改日期</HeadCell>
            <HeadCell $pl={7} $line>类型</HeadCell>
            <HeadCell $pl={6}>大小</HeadCell>
          </FileHead>
          <FileRows>
            {files.map(f => (
              <FileRow key={f[1]} $active={f[5]}>
                <FileName>{fileIcon(f[0])}{f[1]}</FileName>
                <FileCell>{f[2]}</FileCell>
                <FileCell>{f[3]}</FileCell>
                <SizeCell>{f[4]}</SizeCell>
              </FileRow>
            ))}
          </FileRows>
        </FileList>
      </ExplorerBody>
    </Explorer>

    <ServerFrame>
      <Shell>
        <ControlsArt width="92" height="30" viewBox="0 0 92 30">
          <path d="M0 1H2L16 15H42" fill="none" stroke="#8a8a8a" strokeWidth="1.5" />
          <circle cx="48" cy="15" r="7" fill="#999" />
          <circle cx="67" cy="15" r="7" fill="#999" />
          <circle cx="86" cy="15" r="9" fill="#999" />
        </ControlsArt>
        <TitleBar>
          <AppMonitorIcon />
          <TitleText>启动成功  监听端口：9005 当前版本V:1</TitleText>
        </TitleBar>
        <Panel>
          <Toolbar>
            <ToolBtn icon={<GearIcon />} text="软件管理" />
            <ToolBtn icon={<PeopleIcon />} text="全部用户" />
            <ToolBtn icon={<CardIcon />} text="全部卡号" />
            <ToolBtn icon={<UsedCardIcon />} text="已用卡号" />
            <ToolBtn icon={<OfficerIcon />} text="未用卡号" />
            <ToolBtn icon={<LockedCardIcon />} text="封停的卡" />
            <ToolBtn icon={<OnlineIcon />} text="日在线里" />
            <ToolBtn icon={<TrialIcon />} text="试用信息" />
          </Toolbar>
          <MainRow>
            <LeftPane>
              <TableBox>
                <TableHead>
                  {heads.map((h, i) => <HeadTh key={h} $left={i === 0}>{h}</HeadTh>)}
                </TableHead>
                <TableBody>
                  {[0, 1, 2, 3, 4, 5, 6].map(r => (
                    <TableRow key={`row${r}`}>
                      {firstRow.map((c, i) => (
                        <TableCell key={`cell${r}${i}`} $left={i === 0}>{r === 0 ? c : ''}</TableCell>
                      ))}
                    </TableRow>
                  ))}
                </TableBody>
                <HScroll>
                  <ArrowCap />
                  <HThumb />
                  <ArrowCap $right />
                </HScroll>
              </TableBox>

              <Columns>
                <Column $w={311} $ml={1}>
                  <Group $h={132} $mt={11} $pad="12px 0 0 7px">
                    <Watermark>
                      <StampMark>千盾</StampMark>
                      <WaterInk>
                        客解密
                        <WaterSmall>Qian Ke Jie Mi<WaterDot /></WaterSmall>
                      </WaterInk>
                    </Watermark>
                    <FormSplit>
                      <div>
                        <Row>
                          <FieldLabel $w={60}>软件名称:</FieldLabel>
                          <Input $w={155} />
                        </Row>
                        <Row $mt={4}>
                          <FieldLabel $w={60} $pl={2}>当前版本:</FieldLabel>
                          <Select w={155} empty />
                        </Row>
                        <Row $mt={4} $align="flex-start">
                          <FieldLabel $w={59} $mt={16}>下载地址:</FieldLabel>
                          <Area $w={156} $h={64} />
                        </Row>
                      </div>
                      <CheckColumn>
                        <Check text="强制更新" />
                        <Check text="禁止注册" mt={9} />
                        <Check text="禁止登陆" mt={11} ml={1} />
                        <Check text="禁止充值" mt={11} ml={1} />
                      </CheckColumn>
                    </FormSplit>
                  </Group>
                  <Group $h={137} $mt={8} $pad="16px 0 0 6px">
                    <Legend>公告类型</Legend>
                    <Select w={144} text="不弹出公告" />
                    <Area $w={296} $h={88} $mt={4} />
                  </Group>
                  <Group $h={130} $mt={14} $pad="6px 11px 0 0">
                    <IconBtn $w={115} $h={32} $ml={184}>
                      <IconSlot $lead={54} $pad={8}><TableArrowIcon /></IconSlot>
                      生成卡号
                    </IconBtn>
                    <IconBtn $w={115} $h={32} $mt={10} $ml={184}>
                      <IconSlot $lead={49} $pad={2}><LayersIcon /></IconSlot>
                      卡类型管理
                    </IconBtn>
                    <IconBtn $w={115} $h={32} $mt={10} $ml={184}>
                      <IconSlot $lead={49} $pad={0}><DuckIcon /></IconSlot>
                      销售员管理
                    </IconBtn>
                  </Group>
                </Column>

                <Column $w={328} $ml={8}>
                  <Group $h={98} $mt={14} $pad="13px 0 0 5px">
                    <Legend>自定义数据</Legend>
                    <Area $w={314} $h={76} />
                  </Group>
                  <Group $h={91} $mt={13} $pad="14px 0 0 6px">
                    <Legend>登录成功返回数据</Legend>
                    <Area $w={313} $h={68} />
                  </Group>
                  <Group $h={82} $mt={14} $pad="14px 0 0 8px">
                    <Legend>MD5验证</Legend>
                    <Check text="开启MD5验证" />
                    <Area $w={312} $h={40} $mt={6} $ml={-1} />
                  </Group>
                  <Group $h={106} $mt={14} $pad="17px 0 0 16px">
                    <Legend>软件维护信息</Legend>
                    <Row>
                      <Check text="开启软件维护" w={119} />
                      <Select w={176} />
                    </Row>
                    <HintText>维护提示</HintText>
                    <Area $w={296} $h={40} $mt={1} />
                  </Group>
                </Column>

                <Column $w={236} $ml={4}>
                  <Group $h={178} $mt={14} $pad="9px 0 0 0">
                    <Legend>自动解绑设置</Legend>
                    <Row>
                      <FieldLabel $w={126} $right $pr={7}>自动解绑时间:</FieldLabel>
                      <Input $w={50}>0</Input>
                      <Unit>分钟</Unit>
                    </Row>
                    <Row $mt={2}>
                      <FieldLabel $w={126} $right $pr={6}>
                        每&nbsp;
                        <Select w={39} h={20} text="天" />
                        可换机:
                      </FieldLabel>
                      <Input $w={50}>0</Input>
                      <Unit>次</Unit>
                    </Row>
                    <Row $mt={1}>
                      <FieldLabel $w={126} $right $pr={7}>解绑换机扣时:</FieldLabel>
                      <Input $w={50}>0</Input>
                      <Unit>小时</Unit>
                    </Row>
                    <Row $mt={1}>
                      <FieldLabel $w={126} $right $pr={7}>免费解绑次数:</FieldLabel>
                      <Input $w={50}>0</Input>
                      <Unit>次</Unit>
                    </Row>
                    <Row $mt={1}>
                      <FieldLabel $w={126} $right $pr={4}>用户修改绑定信息扣:</FieldLabel>
                      <Input $w={50}>0</Input>
                      <Unit>小时</Unit>
                    </Row>
                    <Check text="每天登陆扣一点" mt={11} ml={15} />
                    <Check text="开启QQ快捷登录" mt={10} ml={16} />
                  </Group>
                  <Group $h={150} $mt={10} $pad="11px 0 0 0">
                    <Legend>试用设置</Legend>
                    <Check text="*开启试用" ml={18} />
                    <Row $mt={4}>
                      <FieldLabel $w={91} $right $pr={8} $color="#008000">可试用时间:</FieldLabel>
                      <Input $w={56} />
                      <Unit $ml={8} $color="#008000">分钟</Unit>
                    </Row>
                    <Row $mt={2}>
                      <FieldLabel $w={91} $right $pr={8}>起始时间:</FieldLabel>
                      <Select w={56} h={19} text="00时" />
                      <Select w={56} h={19} ml={8} text="00分" />
                    </Row>
                    <Row $mt={3}>
                      <FieldLabel $w={91} $right $pr={8}>结束时间:</FieldLabel>
                      <Select w={56} h={19} text="23时" />
                      <Select w={56} h={19} ml={8} text="59分" />
                    </Row>
                    <Row $mt={13} $ml={9}>
                      <Check text="单IP限1台测试" w={113} />
                      <Check text="次日可继续测试" />
                    </Row>
                    <Check text="用过卡或充值过的机器禁止试用" mt={8} ml={9} />
                  </Group>
                  <Group $h={25} $w={232} $mt={9} $ml={4}>
                    <Legend>其它设置</Legend>
                    <ClickFill>· · · 点击设置 · · ·</ClickFill>
                  </Group>
                  <IconBtn $w={172} $h={45} $mt={8} $ml={62}>
                    <IconSlot $lead={101} $pad={21}><RefreshIcon /></IconSlot>
                    更新软件
                  </IconBtn>
                </Column>
              </Columns>
            </LeftPane>

            <Sidebar>
              <SysGroup $h={425}>
                <Legend>系统</Legend>
                <LinkBox>更换皮肤</LinkBox>
                <BlueText>自动封停策略</BlueText>
                <SysChecks>
                  <Check on text="开启日志监控台" />
                  <Check text="最小化时置托盘" mt={8} />
                </SysChecks>
                <SideBtn icon={<DiscIcon />} text="系统功能管理" lead={50} mt={9} />
                <SideBtn icon={<ServerLockIcon />} text="锁定服务端" lead={55} mt={7} />
                <SideBtn icon={<RedXIcon />} text="清空数据库信息" lead={50} mt={9} />
                <SideBtn icon={<ShieldIcon />} text="VMP授权管理" lead={51} mt={6} />
                <SideBtn icon={<JsIcon />} text="管理JS函数" lead={60} mt={7} />
                <SideBtn icon={<BlacklistIcon />} text="黑名单管理" lead={59} mt={7} />
                <SideBtn icon={<FolderOpenIcon />} text="远程文件管理" lead={60} mt={7} />
              </SysGroup>

              <TabStrip>
                <TabItem $w={56} $active>加/减时</TabItem>
                <TabItem $w={49}>加/减点</TabItem>
              </TabStrip>
              <Group $h={123} $line="#8aa5b5" $pad="11px 0 0 20px">
                <Select w={119} h={19} text="所有已使用卡号" />
                <Row $mt={6}>
                  <Select w={48} text="加" />
                  <Input $w={40} $ml={8}>0</Input>
                  <Unit $ml={1}>小时</Unit>
                </Row>
                <Check text="包含到期" mt={3} ml={1} />
                <IconBtn $w={128} $h={36} $mt={5} $ml={-6}>
                  <IconSlot $lead={68} $pad={10}><ClockPlusIcon /></IconSlot>
                  执行操作
                </IconBtn>
              </Group>
            </Sidebar>
          </MainRow>
        </Panel>
      </Shell>
    </ServerFrame>

    <ConsoleWin>
      <ConsoleBar>
        <TerminalIcon />
        <ConsoleTitle>服务端日志窗口：9005</ConsoleTitle>
        <ConsoleBtn><Minus size={14} /></ConsoleBtn>
        <ConsoleBtn><Square size={11} /></ConsoleBtn>
        <ConsoleBtn><X size={15} strokeWidth={1.3} /></ConsoleBtn>
      </ConsoleBar>
      <ConsoleBody>
        <ConsoleText>{'20:22:53  '}<ConsoleWide>准备完毕.</ConsoleWide></ConsoleText>
        <ConsoleScroll>
          <ChevronUp size={13} style={{ marginTop: 2 }} />
          <ConsoleThumb />
        </ConsoleScroll>
      </ConsoleBody>
    </ConsoleWin>
  </Desktop>
);

export default App;
